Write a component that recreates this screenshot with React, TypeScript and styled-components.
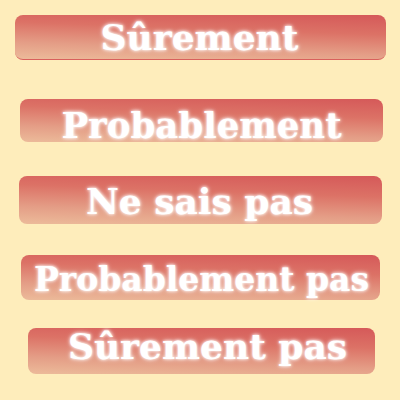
import React from "react";
import styled, { createGlobalStyle } from "styled-components";

const Global = createGlobalStyle`
  html, body { margin: 0; padding: 0; background: #feedbb; }
  body { width: 400px; height: 400px; overflow: hidden; }
`;

const Page = styled.div`
  width: 400px;
  height: 400px;
  background: #feedbb;
  display: flex;
  flex-direction: column;
  align-items: flex-start;
`;

const Button = styled.div<{ $left: number; $top: number; $w: number; $h: number; $fs: number; $line?: boolean }>`
  box-sizing: border-box;
  margin-left: ${(p) => p.$left}px;
  margin-top: ${(p) => p.$top}px;
  width: ${(p) => p.$w}px;
  height: ${(p) => p.$h}px;
  border-radius: 8px;
  background: linear-gradient(182deg, #d55959 0%, #dc7266 35%, #e49d86 70%, #ecbb9a 100%);
  ${(p) => (p.$line ? "border-bottom: 1px solid #d9605c;" : "")}
  display: flex;
  justify-content: center;
  align-items: center;
  font-family: "DejaVu Serif", "Liberation Serif", serif;
  font-weight: bold;
  font-size: ${(p) => p.$fs}px;
  color: #ffffff;
  white-space: nowrap;
  text-shadow: 0 0 3px #ffffff, 0 0 5px rgba(255, 255, 255, 0.8);
`;

const Label = styled.span<{ $ty: number; $tx: number }>`
  display: block;
  line-height: 1;
  transform: translate(${(p) => p.$tx}px, ${(p) => p.$ty}px);
`;

const items = [
  { text: "Sûrement", left: 15, top: 15, w: 371, h: 45, fs: 36, ty: 0, tx: -1, line: true },
  { text: "Probablement", left: 20, top: 39, w: 363, h: 43, fs: 35.5, ty: 5, tx: 0 },
  { text: "Ne sais pas", left: 19, top: 34, w: 363, h: 48, fs: 36, ty: 1, tx: -1 },
  { text: "Probablement pas", left: 21, top: 31, w: 359, h: 45, fs: 33, ty: 2, tx: 1 },
  { text: "Sûrement pas", left: 28, top: 28, w: 347, h: 46, fs: 36, ty: -5, tx: 6 },
];

export default function App() {
  return (
    <>
      <Global />
      <Page>
        {items.map((it) => (
          <Button key={it.text} $left={it.left} $top={it.top} $w={it.w} $h={it.h} $fs={it.fs} $line={it.line}>
            <Label $ty={it.ty} $tx={it.tx}>{it.text}</Label>
          </Button>
        ))}
      </Page>
    </>
  );
}
